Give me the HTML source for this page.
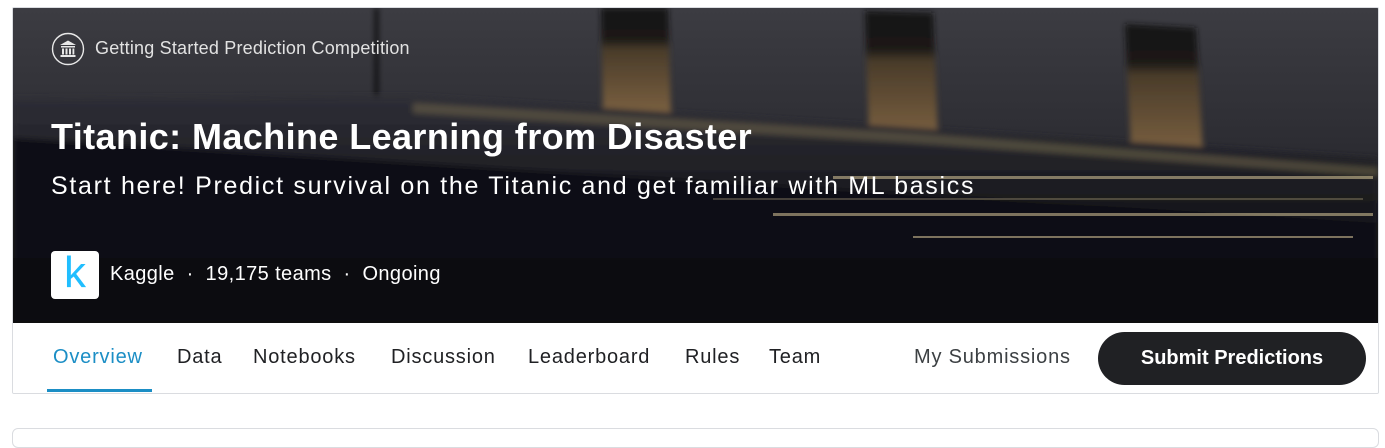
<!DOCTYPE html>
<html><head><meta charset="utf-8"><style>
*{margin:0;padding:0;box-sizing:border-box}
body{width:1385px;height:435px;background:#fff;font-family:"Liberation Sans",Arial,sans-serif;position:relative;overflow:hidden}
.card{position:absolute;left:12px;top:7px;width:1367px;height:387px;border:1px solid #dadce0;border-radius:2px;overflow:hidden}
.banner{position:absolute;left:0;top:0;width:1365px;height:315px;background:#1a1a1d}
.banner svg{position:absolute;left:0;top:0}
.t{position:absolute;color:#fff;white-space:nowrap}
.tabs{position:absolute;top:315px;left:0;width:1365px;height:71px;background:#fff}
.tab{position:absolute;top:23px;font-size:20px;color:#202124;letter-spacing:0.8px;white-space:nowrap}
.btn{position:absolute;left:1085px;top:9px;width:268px;height:53px;border-radius:27px;background:#202124;color:#fff;font-weight:bold;font-size:20px;text-align:center;line-height:53px}
.bottom{position:absolute;left:12px;top:428px;width:1367px;height:20px;border:1px solid #dadce0;border-radius:6px}
</style></head><body>
<div class="card">
 <div class="banner">
  <svg width="1365" height="315" viewBox="0 0 1365 315">
   <defs>
    <linearGradient id="sky" x1="0" y1="0" x2="0" y2="1"><stop offset="0" stop-color="#3c3c42"/><stop offset="0.45" stop-color="#2c2c32"/><stop offset="1" stop-color="#0e0e10"/></linearGradient>
    <linearGradient id="fun" x1="0" y1="0" x2="0" y2="1"><stop offset="0" stop-color="#141416"/><stop offset="0.3" stop-color="#1c1a18"/><stop offset="0.4" stop-color="#4a3c2a"/><stop offset="1" stop-color="#7a6040"/></linearGradient>
    <linearGradient id="hull" x1="0" y1="0" x2="0" y2="1"><stop offset="0" stop-color="#2e2e36"/><stop offset="0.5" stop-color="#18181c"/><stop offset="1" stop-color="#0c0c0e"/></linearGradient>
    <filter id="b"><feGaussianBlur stdDeviation="3"/></filter>
   </defs>
   <rect width="1365" height="315" fill="url(#sky)"/>
   <g filter="url(#b)">
   <rect x="362" y="0" width="3" height="110" fill="#111"/>
   <polygon points="588,0 655,0 658,105 590,105" fill="url(#fun)"/>
   <polygon points="852,3 920,5 925,130 856,128" fill="url(#fun)"/>
   <polygon points="1112,16 1183,20 1190,145 1118,142" fill="url(#fun)"/>
   <polygon points="0,90 400,88 900,120 1365,150 1365,315 0,315" fill="url(#hull)"/>
   <polygon points="0,130 1365,215 1365,315 0,315" fill="#0f0f12"/>
   <polygon points="400,95 900,125 1365,160 1365,168 900,135 400,105" fill="#6a6048" opacity="0.6"/>
   </g>
   <g fill="#d9c89a" opacity="0.55">
    <rect x="820" y="168" width="540" height="3"/>
    <rect x="760" y="205" width="600" height="3"/>
    <rect x="900" y="228" width="440" height="2"/>
    <rect x="700" y="190" width="650" height="2" opacity="0.5"/>
   </g>
   <rect x="0" y="250" width="1365" height="65" fill="#0c0c0e" opacity="0.6"/>
  </svg>
  <svg style="left:38px;top:24px" width="34" height="34" viewBox="0 0 34 34"><circle cx="17" cy="17" r="15.5" fill="none" stroke="#e8e8e8" stroke-width="1.4"/><path d="M9 13 L17 8.5 L25 13 Z M10 14h14v1.5H10z M11 16.5h2v6h-2z M14.5 16.5h2v6h-2z M18 16.5h2v6h-2z M21.5 16.5h1.8v6h-1.8z M9.5 23h15v2h-15z" fill="#e8e8e8"/></svg>
  <div class="t" style="left:82px;top:30px;font-size:18px;color:#e2e2e2;letter-spacing:0.2px">Getting Started Prediction Competition</div>
  <div class="t" style="left:38px;top:108px;font-size:36px;font-weight:bold;letter-spacing:0.4px">Titanic: Machine Learning from Disaster</div>
  <div class="t" style="left:38px;top:164px;font-size:25px;letter-spacing:1.7px">Start here! Predict survival on the Titanic and get familiar with ML basics</div>
  <div style="position:absolute;left:38px;top:243px;width:48px;height:48px;background:#fff;border-radius:4px;color:#20beff;font-size:44px;text-align:center;line-height:44px">k</div>
  <div class="t" style="left:97px;top:255px;font-size:20px;letter-spacing:0.4px">Kaggle &nbsp;·&nbsp; 19,175 teams &nbsp;·&nbsp; Ongoing</div>
 </div>
 <div class="tabs">
  <div class="tab" style="left:40px;color:#1b8ec5">Overview</div>
  <div style="position:absolute;left:34px;top:66px;width:105px;height:3px;background:#1b8ec5"></div>
  <div class="tab" style="left:164px">Data</div>
  <div class="tab" style="left:240px">Notebooks</div>
  <div class="tab" style="left:378px">Discussion</div>
  <div class="tab" style="left:515px">Leaderboard</div>
  <div class="tab" style="left:672px">Rules</div>
  <div class="tab" style="left:756px">Team</div>
  <div class="tab" style="left:901px;color:#3c4043">My Submissions</div>
  <div class="btn">Submit Predictions</div>
 </div>
</div>
<div class="bottom"></div>
</body></html>
